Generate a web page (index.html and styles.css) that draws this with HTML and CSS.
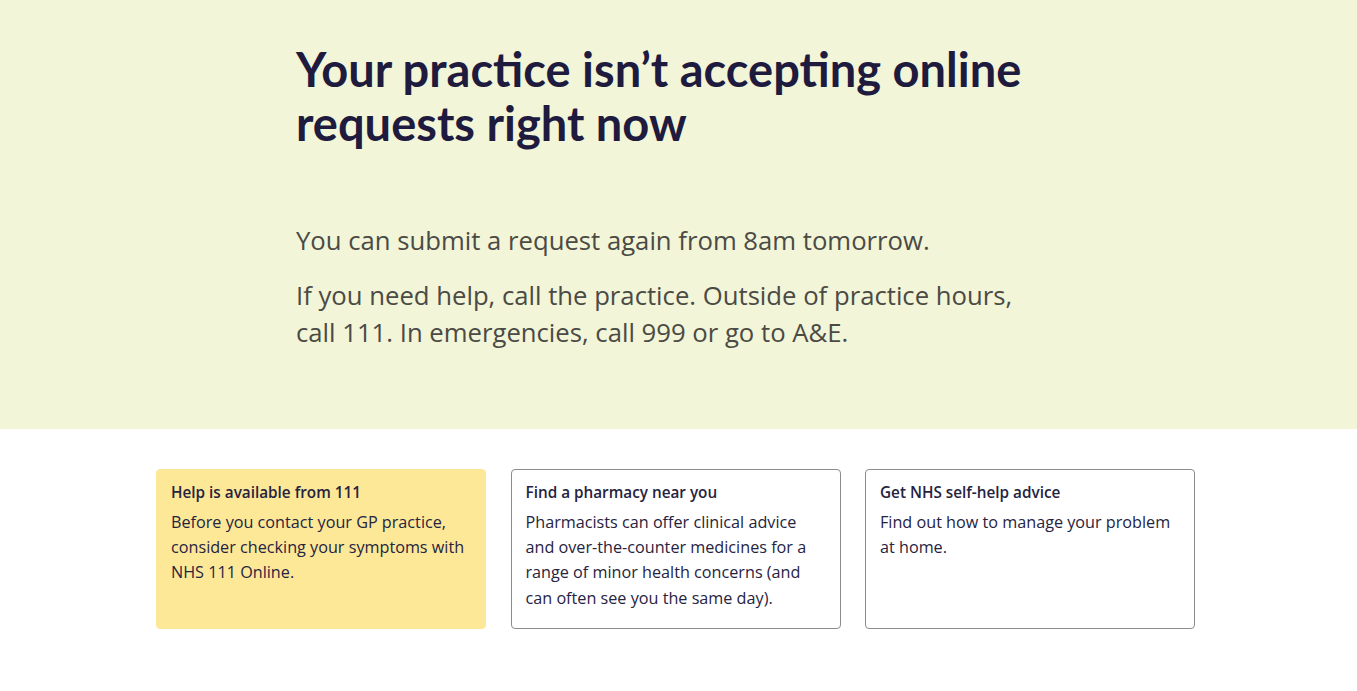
FILE: index.html
```html
<!DOCTYPE html>
<html>

<head>
    <meta charset="utf-8">
    <meta name="viewport" content="width=device-width">
    <title>Online requests closed</title>
    <link rel="stylesheet" href="styles.css">
</head>

<body>
    <div class="banner">
        <div class="banner-inner">
            <h1>Your practice isn’t accepting online requests right now</h1>
            <p>You can submit a request again from 8am tomorrow.</p>
            <p>If you need help, call the practice. Outside of practice hours, call 111. In emergencies, call 999 or go to A&amp;E.</p>
        </div>
    </div>

    <div class="cards">
        <div class="card card-yellow">
            <div class="card-title">Help is available from 111</div>
            <div class="card-text">Before you contact your GP practice, consider checking your symptoms with NHS 111 Online.</div>
        </div>
        <div class="card">
            <div class="card-title">Find a pharmacy near you</div>
            <div class="card-text">Pharmacists can offer clinical advice and over-the-counter medicines for a range of minor health concerns (and can often see you the same day).</div>
        </div>
        <div class="card">
            <div class="card-title">Get NHS self-help advice</div>
            <div class="card-text">Find out how to manage your problem at home.</div>
        </div>
    </div>
</body>

</html>
```

FILE: styles.css
```css
body {
    margin: 0;
    font-family: "Open Sans", Lato, sans-serif;
    background-color: white;
}

.banner {
    background-color: #f2f5d7;
    height: 429px;
    box-sizing: border-box;
    padding-top: 42px;
}

.banner-inner {
    margin-left: 296px;
    width: 735px;
}

h1 {
    margin: 0 0 72px 0;
    font-family: Lato, sans-serif;
    font-size: 47px;
    line-height: 54px;
    font-weight: 700;
    color: #1e1b3e;
}

.banner p {
    margin: 0 0 17px 0;
    font-size: 25.7px;
    line-height: 37.5px;
    color: #4b4a45;
}

.cards {
    display: grid;
    grid-template-columns: 330px 330px 330px;
    gap: 24.5px;
    margin: 40px 0 0 156px;
}

.card {
    height: 160px;
    box-sizing: border-box;
    border: 1px solid #8c8c8c;
    border-radius: 4px;
    padding: 12px 14px;
    color: #262340;
}

.card-yellow {
    background-color: #fde898;
    border-color: #fde898;
}

.card-title {
    font-size: 15.3px;
    font-weight: 600;
    line-height: 20px;
    margin-bottom: 8px;
}

.card-text {
    font-size: 16.2px;
    line-height: 25.2px;
}
```
